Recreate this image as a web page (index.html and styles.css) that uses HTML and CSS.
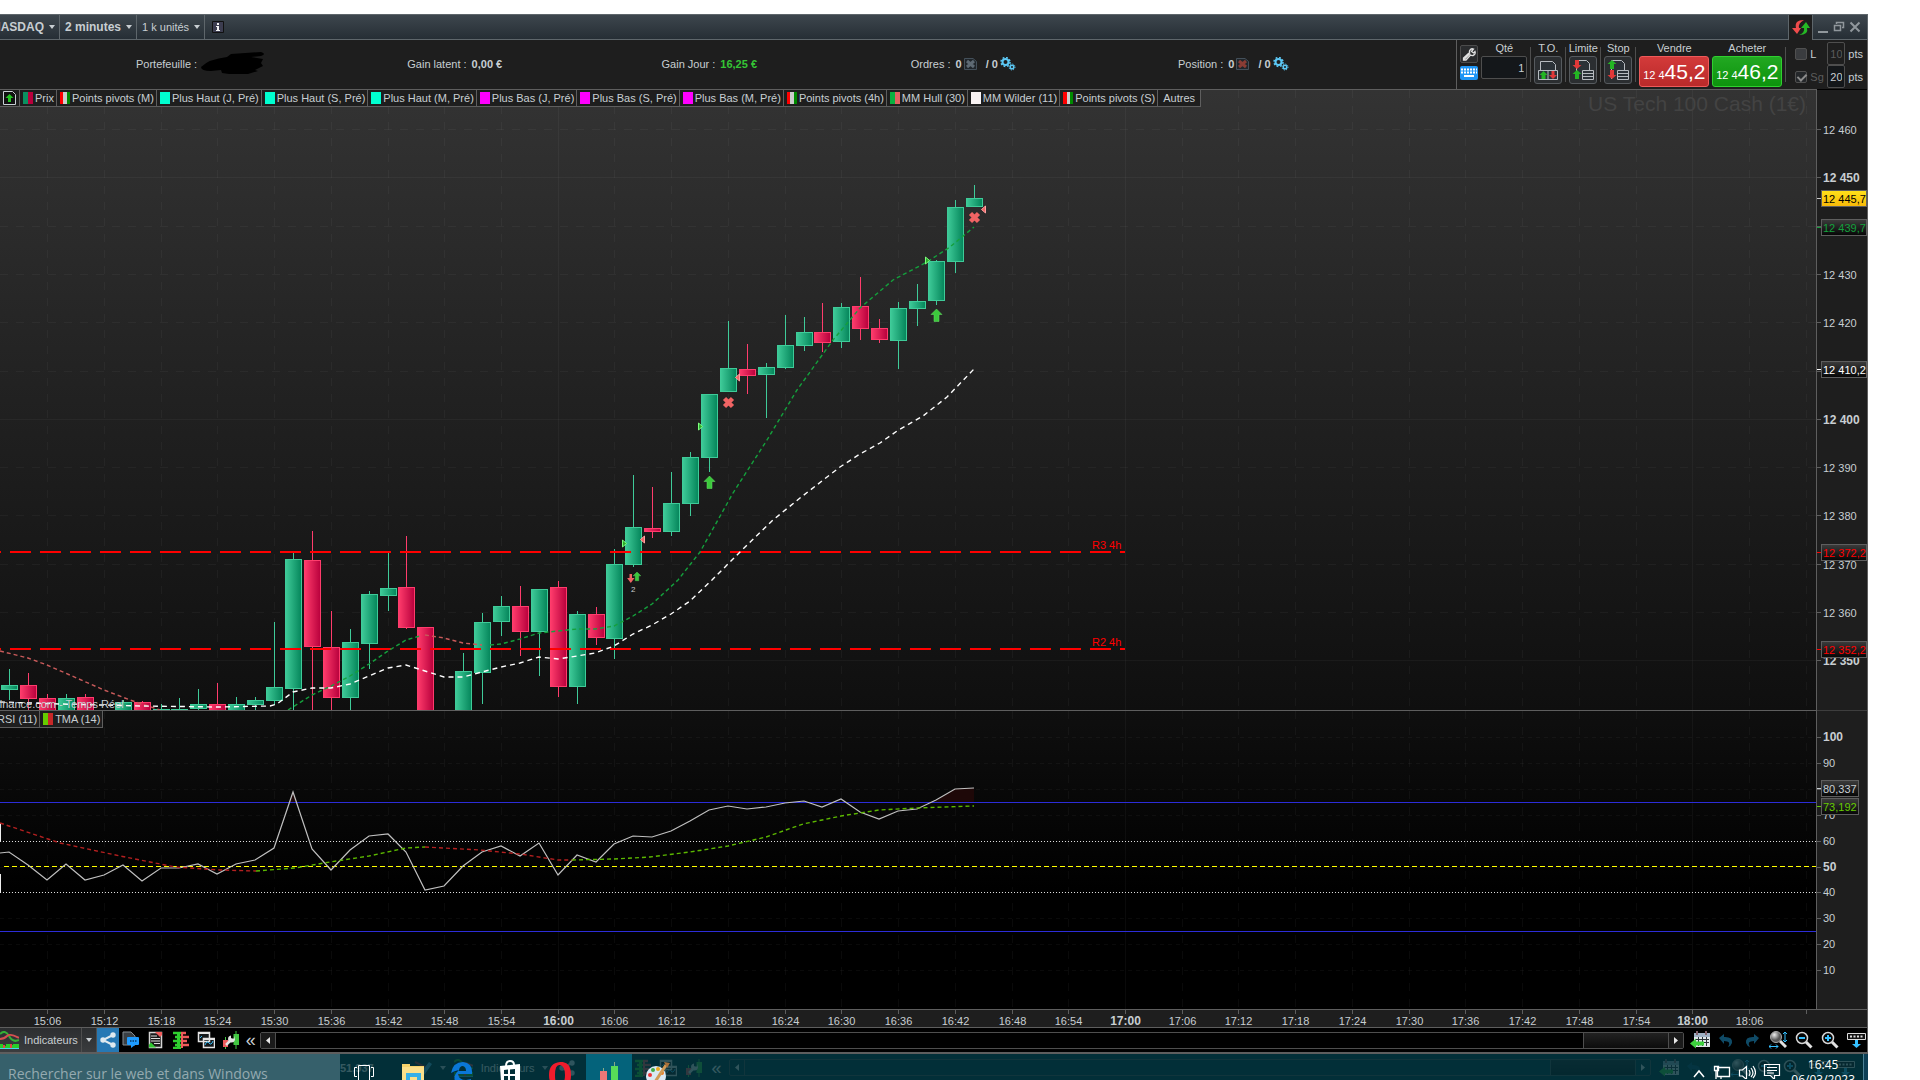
FILE: index.html
```html
<!DOCTYPE html>
<html lang="fr">
<head>
<meta charset="utf-8">
<title>NASDAQ - 2 minutes</title>
<link rel="stylesheet" href="styles.css">
</head>
<body>
<svg class="defs" width="0" height="0" aria-hidden="true">
  <defs>
    <linearGradient id="up"><stop offset="0" stop-color="#3fcb99"/><stop offset="1" stop-color="#04855a"/></linearGradient>
    <linearGradient id="down"><stop offset="0" stop-color="#ff3c6c"/><stop offset="1" stop-color="#b8003c"/></linearGradient>
    <linearGradient id="tag" x2="0" y2="1"><stop offset="0" stop-color="#3c3c3c"/><stop offset="1" stop-color="#050505"/></linearGradient>
    <linearGradient id="gold" x2="0" y2="1"><stop offset="0" stop-color="#ffe21a"/><stop offset="1" stop-color="#f8b808"/></linearGradient>
    <radialGradient id="lens" cx=".35" cy=".3"><stop offset="0" stop-color="#eee"/><stop offset="1" stop-color="#555"/></radialGradient>
    <symbol id="gears" viewBox="0 0 16 14">
      <circle cx="5.500" cy="5" r="3" fill="none" stroke="#5cc8f5" stroke-width="2"/>
      <circle cx="5.500" cy="5" r="4.500" fill="none" stroke="#5cc8f5" stroke-width="1.500" stroke-dasharray="1.770 1.770"/>
      <circle cx="12" cy="10" r="1.800" fill="none" stroke="#5cc8f5" stroke-width="1.500"/>
      <circle cx="12" cy="10" r="3" fill="none" stroke="#5cc8f5" stroke-width="1" stroke-dasharray="1.180 1.180"/>
    </symbol>
    <symbol id="cancel" viewBox="0 0 13 12">
      <path d="M.5.500h8.500l3.500 3v8H.5z" fill="#20262b" stroke="#44505a"/>
      <path d="M3 3l7 6M10 3l-7 6" stroke="currentColor" stroke-width="3"/>
    </symbol>
    <symbol id="share" viewBox="0 0 22 24">
      <path d="M16 7L6 12l10 5" stroke="#dfe9ef" stroke-width="2" fill="none"/>
      <circle cx="16" cy="7" r="2.700" fill="#dfe9ef"/><circle cx="6" cy="12" r="2.700" fill="#dfe9ef"/><circle cx="16" cy="17" r="2.700" fill="#dfe9ef"/>
    </symbol>
    <symbol id="chat" viewBox="0 0 18 18">
      <path d="M1 1h8l4 4v9H1z" fill="#3a4045" stroke="#848c92"/>
      <path d="M6 6h10q1 0 1 1v6q0 1-1 1h-3l-4 3v-3H6q-1 0-1-1V7q0-1 1-1z" fill="#1e9bff"/>
      <path d="M8 10h1.500M10.500 10H12M13 10h1.500" stroke="#083a66" stroke-width="1.500"/>
    </symbol>
    <symbol id="sheet" viewBox="0 0 15 18">
      <path d="M1.500 1.500h12v15h-12z" fill="#1a1a1a" stroke="#d5d5d5" stroke-width="1.500"/>
      <path d="M3 5h6M3 7.500h9M3 10h9M6 12.500h6" stroke="#ddd"/>
      <path d="M7 1h7v3l-2 2z" fill="#f35c5c"/><path d="M1 16.500v-3l2-2 5 5z" fill="#2fc52f"/>
    </symbol>
    <symbol id="book" viewBox="0 0 16 18">
      <path d="M0 2h8M2 6h6M0 10h8M2 14h6M0 17h8" stroke="#2fd02f" stroke-width="2.600"/><path d="M4 1v16h3V1z" fill="#2fd02f"/>
      <path d="M8 2h5M8 6h8M8 10h6M8 14h8" stroke="#ef5a5a" stroke-width="2.600"/><path d="M8 1v16h2V1z" fill="#ef5a5a"/>
    </symbol>
    <symbol id="windows" viewBox="0 0 18 18">
      <path d="M1.500 1.500h11v9h-11zM6.500 7.500h11v9h-11z" fill="#14181b" stroke="#e4e4e4" stroke-width="1.500"/>
      <path d="M1 2h12M6 8h12" stroke="#e4e4e4" stroke-width="2"/>
      <path d="M8 14q2-5 4-2t4-2" stroke="#35b8f0" fill="none"/><path d="M3 7l2-2" stroke="#35b8f0"/>
    </symbol>
    <symbol id="tools" viewBox="0 0 18 18">
      <path d="M3.500 6v12M14 0v18" stroke="#42c842"/><path d="M1 9h5v7H1z" fill="#ef5a5a"/><path d="M11.500 3h5.500v11h-5.500z" fill="#42c842"/>
      <path d="M4 14l6-6" stroke="#e3e3e3" stroke-width="2.500"/><path d="M12 4.500v3h-3v-3a3.500 3.500 0 1 0 4 4z" fill="#e3e3e3"/>
    </symbol>
    <symbol id="zoomin" viewBox="0 0 18 18">
      <path d="M11 11l5.500 5.500" stroke="#e2e2e2" stroke-width="3"/><circle cx="7" cy="7" r="5.500" fill="#050505" stroke="#d6d6d6" stroke-width="1.500"/><path d="M4 7h6M7 4v6" stroke="#35c0ff" stroke-width="2"/>
    </symbol>
    <symbol id="zoomout" viewBox="0 0 18 18">
      <path d="M11 11l5.500 5.500" stroke="#e2e2e2" stroke-width="3"/><circle cx="7" cy="7" r="5.500" fill="#050505" stroke="#d6d6d6" stroke-width="1.500"/><path d="M4 7h6" stroke="#35c0ff" stroke-width="2"/>
    </symbol>
    <symbol id="zoomfit" viewBox="0 0 18 18">
      <path d="M11 10l6 6" stroke="#e2e2e2" stroke-width="3"/><circle cx="7" cy="6" r="5.500" fill="url(#lens)" stroke="#aaa"/><path d="M16 1v10M14 3l2-2 2 2M14 9l2 2 2-2M0 15.500h9M2 13.500l-2 2 2 2M7 13.500l2 2-2 2" stroke="#35c0ff" fill="none"/>
    </symbol>
    <symbol id="undo" viewBox="0 0 14 14"><path d="M0 5l5-4v3q9-.5 8 6q-1 3-4 4q4-6-4-6v3z" fill="#0f4a66"/></symbol>
    <symbol id="goto" viewBox="0 0 20 18">
      <path d="M4 2h16v14H4z" fill="#dfe5e9"/><path d="M4 2h16v4H4z" fill="#9fb0c4"/><path d="M7 0v4M16 0v4" stroke="#84626c" stroke-width="2"/>
      <path d="M5 8.500h14M5 11.500h14M8.500 6v9M12.500 6v9M16.500 6v9" stroke="#2c3338"/><path d="M0 12.500l6-5v3h8v4H6v3z" fill="#3dd03d"/>
    </symbol>
    <symbol id="dock" viewBox="0 0 19 16">
      <path d="M.5 1.500h18v6H.5z" fill="#111" stroke="#ddd"/><path d="M3 4.500h13" stroke="#ddd" stroke-width="2" stroke-dasharray="2 1.500"/><path d="M8 8h3v4h3l-4.500 4L5 12h3z" fill="#35c0ff"/>
    </symbol>
    <symbol id="wave" viewBox="0 0 19 18">
      <path d="M0 3Q5-2 9 5t10 4" stroke="#35b035" stroke-width="2" fill="none"/><path d="M0 8q4 0 7-3t12 2" stroke="#d75050" stroke-width="2" fill="none"/>
      <path d="M0 18v-5h3v2h3v-2h4v1h3v-1h6v5z" fill="#28cc28"/><path d="M3 14h2v4H3zM10 13h2v5h-2z" fill="#e04545"/><path d="M0 17.500h19" stroke="#45d8e8"/>
    </symbol>
  </defs>
</svg>

<div class="app">
  <header class="titlebar">
    <button class="tb-item tb-name">NASDAQ<i class="caret"></i></button>
    <button class="tb-item">2 minutes<i class="caret"></i></button>
    <button class="tb-item tb-light">1 k unités<i class="caret"></i></button>
    <button class="info" aria-label="Informations"><svg width="12" height="12"><path d="M.5.500h11v11H.5z" fill="#3c3d50" stroke="#111"/><path d="M5 2h2v2H5zM4 5h3v4h1v1H4V9h1V6H4z" fill="#f2f2f2"/></svg></button>
    <div class="win">
      <button class="sync" aria-label="Synchroniser"><svg width="18" height="18"><path d="M12 1Q2 1 4 9H0l5 6 4-6H7Q6 4 12 1z" fill="#ef4b4b"/><path d="M7 16q10 0 8-7h3l-4-6-5 6h3q1 5-5 7z" fill="#25b825"/></svg></button>
      <button aria-label="Réduire"><svg width="12" height="14"><path d="M1 11h10v2H1z" fill="#90979c"/></svg></button>
      <button aria-label="Restaurer"><svg width="12" height="14"><path d="M3.500 4V2.500h7v5H9M1.500 5.500h6v5h-6z" fill="none" stroke="#90979c" stroke-width="1.500"/></svg></button>
      <button aria-label="Fermer"><svg width="12" height="14"><path d="M1.500 2.500l9 9M10.500 2.500l-9 9" stroke="#90979c" stroke-width="2"/></svg></button>
    </div>
  </header>

  <div class="status">
    <div class="account">
      <div class="field">Portefeuille :
        <svg width="68" height="26"><path d="M2 16Q10 8 28 6l4-3 30-2q6 2 0 4l-10 1 12 2-2 4 2 3-8 4 3 1-10 3H30l-7-1-1-3-10 1Q2 20 2 16z" fill="#000"/></svg>
      </div>
      <div class="field">Gain latent : <b>0,00 €</b></div>
      <div class="field">Gain Jour : <b class="gain">16,25 €</b></div>
      <div class="field">Ordres : <b>0</b><svg class="c-grey" width="13" height="12"><use href="#cancel"/></svg><b class="slash">/ 0</b><svg width="16" height="14"><use href="#gears"/></svg></div>
      <div class="field">Position : <b>0</b><svg class="c-red" width="13" height="12"><use href="#cancel"/></svg><b class="slash">/ 0</b><svg width="16" height="14"><use href="#gears"/></svg></div>
    </div>
    <form class="trade">
      <div class="tools">
        <button type="button" class="sq" aria-label="Réglages"><svg width="14" height="14"><path d="M2 12.500l6-6M8 6.500a3 3 0 0 1 3.500-4.500L9.500 4.500l2 1.500 1.500-1.500a3 3 0 0 1-4.500 3.500L4 13H1.500V11L7 6" fill="none" stroke="#e0e0e0" stroke-width="1.300"/></svg></button>
        <button type="button" class="kbd" aria-label="Clavier"><svg width="16" height="10"><path d="M0 1.500h16M0 4.500h16" stroke="#fff" stroke-width="2" stroke-dasharray="2 1"/><path d="M3 8h10" stroke="#fff" stroke-width="2"/></svg></button>
      </div>
      <label class="col qty"><span>Qté</span><input value="1"></label>
      <i class="sep"></i>
      <div class="col"><span>T.O.</span><button type="button" class="ord" aria-label="T.O."><svg width="22" height="22"><path d="M3.500 11V2.500h12l3 3V11M1.500 11.500h19v9h-19zM11 11v9" fill="#2b3238" stroke="#b6bbc0"/><path d="M6.500 12l4 4h-2v4h-4v-4h-2z" fill="#23b523"/><path d="M14.500 12h3v4h2.500l-4 4-4-4h2.500z" fill="#e03838"/></svg></button></div>
      <i class="sep"></i>
      <div class="col"><span>Limite</span><button type="button" class="ord" aria-label="Limite"><svg width="22" height="22"><path d="M4.500 20V1.500h10l3 3V11M10.500 11.500h11v9h-11zM10.500 14.500h11M10.500 17.500h11" fill="#2b3238" stroke="#b6bbc0"/><path d="M3 1h4v5h2.500L5 10 .5 6H3z" fill="#e03838"/><path d="M5 11l4.500 4H7v5H3v-5H.5z" fill="#23b523"/></svg></button></div>
      <i class="sep"></i>
      <div class="col"><span>Stop</span><button type="button" class="ord" aria-label="Stop"><svg width="22" height="22"><path d="M4.500 20V1.500h10l3 3V11M10.500 11.500h11v9h-11zM10.500 14.500h11M10.500 17.500h11" fill="#2b3238" stroke="#b6bbc0"/><path d="M5 1l4.500 4H7v5H3V5H.5z" fill="#23b523"/><path d="M3 11h4v5h2.500L5 20 .5 16H3z" fill="#e03838"/></svg></button></div>
      <i class="sep"></i>
      <div class="col deal"><span>Vendre</span><button type="button" class="sell"><small>12 4</small>45,2</button></div>
      <div class="col deal"><span>Acheter</span><button type="button" class="buy"><small>12 4</small>46,2</button></div>
      <i class="sep"></i>
      <div class="stops">
        <label class="off"><input type="checkbox"><span>L</span></label>
        <label><input class="pts dim" value="10"> pts</label>
        <label class="off dim"><input type="checkbox" checked><span>Sg</span></label>
        <label><input class="pts" value="20"> pts</label>
      </div>
    </form>
  </div>

  <main class="chart">
    <section class="plot price">
      <svg id="price" class="canvas"></svg>
      <div class="watermark">US Tech 100 Cash (1€)</div>
      <div class="source">Finance.com - Temps Réel</div>
      <nav class="legend">
        <button class="hide" aria-label="Masquer"><svg width="13" height="14"><path d="M.500.500h9l3 3v10H.5z" fill="#111" stroke="#c8d0d4"/><path d="M6.500 3l4 4h-2.500v4H5V7H2.500z" fill="#22c322"/></svg></button>
        <button><i class="chip prix"></i>Prix</button>
        <button><i class="chip pivot"></i>Points pivots (M)</button>
        <button><i class="chip aqua"></i>Plus Haut (J, Pré)</button>
        <button><i class="chip aqua"></i>Plus Haut (S, Pré)</button>
        <button><i class="chip aqua"></i>Plus Haut (M, Pré)</button>
        <button><i class="chip pink"></i>Plus Bas (J, Pré)</button>
        <button><i class="chip pink"></i>Plus Bas (S, Pré)</button>
        <button><i class="chip pink"></i>Plus Bas (M, Pré)</button>
        <button><i class="chip pivot"></i>Points pivots (4h)</button>
        <button><i class="chip hull"></i>MM Hull (30)</button>
        <button><i class="chip wilder"></i>MM Wilder (11)</button>
        <button><i class="chip pivot"></i>Points pivots (S)</button>
        <button class="others">Autres</button>
      </nav>
    </section>
    <svg id="price-axis" class="axis"></svg>
    <section class="plot rsi">
      <svg id="rsi" class="canvas"></svg>
      <nav class="legend">
        <button class="cut">RSI (11)</button>
        <button><i class="chip tma"></i>TMA (14)</button>
      </nav>
    </section>
    <svg id="rsi-axis" class="axis"></svg>
    <svg id="time-axis" class="time"></svg>
  </main>

  <footer class="toolbar">
    <button class="ind"><svg width="19" height="18"><use href="#wave"/></svg>Indicateurs</button>
    <button class="ind-more" aria-label="Plus"><i class="caret"></i></button>
    <button class="share" aria-label="Partager"><svg width="22" height="24"><use href="#share"/></svg></button>
    <button class="ico" aria-label="Messages"><svg width="18" height="18"><use href="#chat"/></svg></button>
    <button class="ico" aria-label="Liste"><svg width="15" height="18"><use href="#sheet"/></svg></button>
    <button class="ico" aria-label="Carnet"><svg width="16" height="18"><use href="#book"/></svg></button>
    <button class="ico" aria-label="Fenêtres"><svg width="18" height="18"><use href="#windows"/></svg></button>
    <button class="ico" aria-label="Outils"><svg width="18" height="18"><use href="#tools"/></svg></button>
    <button class="chev" aria-label="Replier">«</button>
    <div class="scroll">
      <button aria-label="Gauche"><svg width="14" height="15"><path d="M9 4v7L5 7.500z" fill="#e8e8e8"/></svg></button>
      <div class="track"><div class="thumb"></div></div>
      <button aria-label="Droite"><svg width="14" height="15"><path d="M5 4v7l4-3.500z" fill="#e8e8e8"/></svg></button>
    </div>
    <div class="right">
      <button class="ico" aria-label="Date"><svg width="20" height="18"><use href="#goto"/></svg></button>
      <button class="ico" aria-label="Annuler"><svg width="14" height="14"><use href="#undo"/></svg></button>
      <button class="ico flip" aria-label="Rétablir"><svg width="14" height="14"><use href="#undo"/></svg></button>
      <button class="ico" aria-label="Ajuster"><svg width="18" height="18"><use href="#zoomfit"/></svg></button>
      <button class="ico" aria-label="Zoom arrière"><svg width="18" height="18"><use href="#zoomout"/></svg></button>
      <button class="ico" aria-label="Zoom avant"><svg width="18" height="18"><use href="#zoomin"/></svg></button>
      <button class="ico" aria-label="Ancrer"><svg width="19" height="16"><use href="#dock"/></svg></button>
    </div>
  </footer>

  <div class="taskbar">
    <div class="search">Rechercher sur le web et dans Windows</div>
    <div class="apps">
      <div class="ghost" aria-hidden="true">
        <b>51,937</b>
        <i class="g-box"></i>
        <svg width="18" height="18"><path d="M1 3l12 6" stroke="#b03030" stroke-width="2"/><path d="M6 18l2-6L15 3l3 2-7 10z" fill="#55b8e8"/></svg>
        <i class="caret"></i><svg width="19" height="18"><use href="#wave"/></svg><span>Indicateurs</span><i class="caret"></i>
        <svg width="22" height="24"><use href="#share"/></svg><svg width="18" height="18"><use href="#chat"/></svg><svg width="15" height="18"><use href="#sheet"/></svg>
        <svg width="16" height="18"><use href="#book"/></svg><svg width="18" height="18"><use href="#windows"/></svg><svg width="18" height="18"><use href="#tools"/></svg>
        <span class="chev">«</span>
        <div class="scroll"><svg width="14" height="15"><path d="M9 4v7L5 7.500z" fill="#e8e8e8"/></svg><div class="track"><div class="thumb"></div></div><svg width="14" height="15"><path d="M5 4v7l4-3.500z" fill="#e8e8e8"/></svg></div>
        <svg width="20" height="18"><use href="#goto"/></svg><svg width="14" height="14"><use href="#undo"/></svg><svg class="flip" width="14" height="14"><use href="#undo"/></svg><svg width="18" height="18"><use href="#zoomfit"/></svg><svg width="18" height="18"><use href="#zoomout"/></svg><svg width="18" height="18"><use href="#zoomin"/></svg><svg width="19" height="16"><use href="#dock"/></svg><svg width="19" height="16"><use href="#dock"/></svg>
      </div>
      <button aria-label="Vue des tâches"><svg width="22" height="20"><path d="M5.500 3.500h11v16h-11zM4 5.500H1.500v9H4M18 5.500h2.500v9H18" fill="none" stroke="#fff"/></svg></button>
      <button aria-label="Explorateur"><svg width="24" height="20"><path d="M1 2h8v2h14v16H1z" fill="#f6d36b"/><path d="M1 5h22v15H1z" fill="#fbe08a"/><path d="M5 20v-9h15v9h-4v-5H9v5z" fill="#35b0e8"/></svg></button>
      <button aria-label="Edge"><svg width="22" height="20"><path d="M0 11Q2 0 12 0q10 1 9 12H7q1 6 8 6l5-1v5H6q-6-7 2-14-5 1-8 3zm8-2h7q0-5-4-5-3 1-3 5z" fill="#0a78d7"/></svg></button>
      <button aria-label="Store"><svg width="24" height="22"><path d="M1 6l20-2v18H2z" fill="#fff"/><path d="M7 6q0-5 4-5t4 4" fill="none" stroke="#fff" stroke-width="2"/><path d="M5 10l4-.5V14H5zM11 9.500l5-.5v5h-5zM5 16h4v5H5zM11 16h5v5h-5z" fill="#022f38"/></svg></button>
      <button aria-label="Opera"><svg width="24" height="20"><path fill-rule="evenodd" d="M12 0Q1 1 1 13t11 13 11-13T12 0zm0 3q5 1 5 10t-5 10-5-10 5-10z" fill="#f01c2c"/></svg></button>
      <button class="active" aria-label="Trading"><svg width="22" height="20"><path d="M2 9h7v11H2z" fill="#ee7777"/><path d="M5.500 6v3M16.500 0v20" stroke="#8a8"/><path d="M13 4h7v16h-7z" fill="#58dc58"/></svg></button>
      <button aria-label="Paint"><svg width="26" height="20"><ellipse cx="11" cy="14" rx="10" ry="10" fill="#d9e8f4"/><circle cx="5" cy="13" r="2" fill="#e33"/><circle cx="8" cy="8" r="2" fill="#4a4"/><circle cx="13" cy="7" r="2" fill="#eba920"/><circle cx="17" cy="11" r="2" fill="#ed7d23"/><path d="M10 20L21 3" stroke="#d19a55" stroke-width="3"/><path d="M19 0l6 1-3 5z" fill="#a9713c"/></svg></button>
      <div class="tray">
        <svg width="14" height="16"><path d="M2 14l5-6 5 6" fill="none" stroke="#fff" stroke-width="1.500"/></svg>
        <svg width="18" height="16"><path d="M4.500 4.500h12v9h-12zM1.500 3.500h4v4h-4zM8 16v-2M3 8v8" fill="none" stroke="#fff" stroke-width="1.300"/></svg>
        <svg width="18" height="16"><path d="M1.500 7h3l4-3.500v13L4.500 13h-3zM11 7q2 3 0 6M13 5q4 5 0 9M15 3q5 7 0 12" fill="none" stroke="#fff" stroke-width="1.200"/></svg>
        <svg width="18" height="16"><path d="M1.500 1.500h15v11h-5v4l-4-4h-6zM4 4.500h10M4 7.500h10M4 10h7" fill="none" stroke="#fff" stroke-width="1.200"/></svg>
        <div class="clock">16:45<br>06/03/2023</div>
      </div>
    </div>
    <div class="desk"></div>
  </div>
</div>
<script src="chart.js"></script>
</body>
</html>
```
FILE: styles.css
```css
* { box-sizing: border-box; }
body { margin: 0; background: #fff; color: #c8ced2; font: 11px/14px "Liberation Sans", Arial, sans-serif; height: 100vh; overflow: hidden; }
button, input { font: inherit; color: inherit; margin: 0; }
button { background: none; border: 0; padding: 0; display: flex; align-items: center; justify-content: center; white-space: nowrap; }
svg { display: block; flex: none; }
.defs { position: absolute; }
.app { margin: 14px 52px 0 0; background: #1e1e1e; overflow: hidden; }
.caret { width: 0; height: 0; border: 3px solid transparent; border-top: 4px solid #c8ced2; border-bottom: 0; flex: none; }

.titlebar { display: flex; height: 26px; border-top: 1px solid #5e666b; border-bottom: 1px solid #5e666b; background: linear-gradient(#3d464d, #262e35); border-right: 1px solid #5e666b; }
.tb-item { gap: 5px; padding: 0 4px 0 5px; border-right: 1px solid #5e666b; font-weight: bold; font-size: 12px; }
.tb-name { margin-left: -13px; }
.tb-light { font-weight: normal; font-size: 11px; }
.info { padding: 0 7px; }
.win { margin-left: auto; display: flex; gap: 4px; padding-right: 6px; }
.sync { width: 25px; height: 25px; background: #1e1e1e; border: 1px solid #5e666b; border-width: 0 1px; }

.status { display: flex; height: 49px; border-right: 1px solid #5e5e5e; }
.account { flex: 1; display: grid; grid-template-columns: 271fr 254fr 249fr 267fr 278fr; padding: 0 0 2px 136px; align-items: center; }
.field { display: flex; align-items: center; gap: 2px; white-space: nowrap; }
.field b { margin-left: 3px; }
.field .slash { margin-left: 7px; }
.gain { color: #35c535; }
.c-grey { color: #5e6a74; }
.c-red { color: #8a3c34; }

.trade { display: flex; gap: 3px; padding: 1px 4px 0 3px; border-left: 1px solid #5e5e5e; }
.tools { display: flex; flex-direction: column; gap: 3px; padding-top: 4px; }
.sq, .kbd { width: 18px; border-radius: 2px; }
.sq { height: 18px; background: #2a2c2e; border: 1px solid #4c4c4c; }
.kbd { height: 14px; background: #1e95f5; }
.col { display: flex; flex-direction: column; align-items: center; gap: 1px; width: 28px; white-space: nowrap; }
.qty { width: 46px; }
.qty input { width: 46px; height: 23px; border: 1px solid #4e4e4e; border-radius: 2px; background: #14171a; text-align: right; padding: 0 2px; }
.sep { width: 1px; height: 35px; margin-top: 6px; background: #4e4e4e; }
.ord { width: 28px; height: 28px; border: 1px solid #565a5e; border-radius: 3px; background: #2b2e31; }
.deal { width: 70px; }
.deal button { width: 70px; height: 31px; border-radius: 3px; color: #fff; font-size: 21px; line-height: 29px; align-items: baseline; }
.deal small { font-size: 11px; }
.sell { background: linear-gradient(#d33a3a, #b92a2a); border: 1px solid #ef5a5a; }
.buy { background: linear-gradient(#22a822, #0d930d); border: 1px solid #2fd02f; }
.stops { display: grid; grid-template-columns: 32px auto; grid-auto-rows: 23px; align-content: start; align-items: center; padding: 1px 0 0 6px; }
.stops label { display: flex; align-items: center; gap: 3px; }
.off input { appearance: none; margin: 0; width: 12px; height: 12px; border: 1px solid #505050; border-radius: 2px; background: #3a3c3f; flex: none; }
.off input:checked { background: #24272a; }
.off input:checked::after { content: ""; display: block; width: 4px; height: 7px; margin: 0 3px; border: solid #8c8c8c; border-width: 0 2px 2px 0; transform: rotate(45deg); }
.dim { color: #5c5c5c; }
.pts { width: 18px; height: 23px; border: 1px solid #4e4e4e; border-radius: 2px; background: #14171a; padding: 0 2px; }
.pts.dim { background: #1e1e1e; }

.chart { display: grid; grid-template-columns: 1fr 50px; grid-template-rows: auto auto 19px; border-right: 1px solid #5e5e5e; }
.plot { position: relative; border-top: 1px solid #5e5e5e; border-right: 1px solid #5e5e5e; min-width: 0; }
.price { height: 621px; background: linear-gradient(#333, #0f0f0f); }
.rsi { height: 299px; background: linear-gradient(#0f0f0f, #000 60%); }
.canvas { width: 100%; height: 100%; overflow: hidden; }
.axis { width: 100%; height: 100%; }
.time { grid-column: 1 / -1; width: 100%; height: 19px; border-top: 1px solid #5e5e5e; border-bottom: 1px solid #5e5e5e; }
.legend { position: absolute; left: 0; top: 0; display: flex; height: 17px; background: #1e1e1e; border-bottom: 1px solid #5e5e5e; }
.legend button { gap: 2px; padding: 0 2px 0 3px; border-right: 1px solid #5e5e5e; }
.legend .hide { padding: 0 3px; }
.legend .others { padding: 0 5px; }
.legend .cut { margin-left: -6px; }
.chip { width: 10px; height: 12px; }
.prix { background: linear-gradient(90deg, #0a9160 50%, #b8003c 50%); }
.pivot { background: linear-gradient(90deg, #f00 35%, #ccc 35% 68%, #008a00 68%); }
.aqua { background: #00ffd0; }
.pink { background: #f0f; }
.hull { background: linear-gradient(90deg, #08b040 50%, #e06060 50%); }
.wilder { background: #faf4f4; }
.tma { background: linear-gradient(90deg, #66cc00 50%, #c82828 50%); }
.watermark { position: absolute; right: 10px; top: 2px; font-size: 21px; line-height: 24px; color: #434343; }
.source { position: absolute; left: -7px; bottom: 0; line-height: 12px; color: #c8ced2; }
svg text { fill: #c8ced2; font-size: 11px; }
svg text.major { font-size: 12px; font-weight: bold; }

.toolbar { display: flex; align-items: center; height: 26px; background: #000; border-bottom: 2px solid #5e5e5e; border-right: 1px solid #5e5e5e; }
.ind, .ind-more { height: 24px; background: linear-gradient(#2c2e30, #3a3c3e); border-right: 1px solid #4e4e4e; }
.ind { gap: 5px; padding-right: 3px; }
.ind-more { width: 15px; }
.share { background: #2678b4; margin-right: 2px; }
.ico { width: 20px; margin-right: 5px; }
.chev { font-size: 18px; margin-right: 4px; }
.flip { transform: scaleX(-1); }
.scroll { flex: 1; display: flex; height: 17px; border: 1px solid #4e4e4e; border-radius: 2px; }
.scroll button { background: #1a1a1a; }
.track { flex: 1; display: flex; justify-content: flex-end; border: 1px solid #4e4e4e; border-width: 0 1px; }
.thumb { width: 85px; background: linear-gradient(#222, #0c0c0c); border-left: 1px solid #4e4e4e; }
.right { display: flex; gap: 6px; padding: 0 1px 0 6px; }
.right .ico { margin: 0; }

.taskbar { display: flex; height: 27px; overflow: hidden; background: #022f38; color: #fff; }
.search { width: 340px; padding: 8px 8px 0; background: #36606b; color: #94aab0; font: 14px/24px "Open Sans", "Noto Sans", sans-serif; white-space: nowrap; }
.apps { position: relative; flex: 1; min-width: 0; display: flex; padding-left: 1px; }
.apps button { width: 46px; height: 28px; align-items: flex-end; margin-right: 3px; }
.apps button, .tray { position: relative; }
.apps .active { background: #04637b; }
.ghost { position: absolute; inset: 0; display: flex; align-items: center; gap: 8px; padding-right: 8px; opacity: .2; }
.ghost .g-box { width: 24px; }
.ghost .chev { margin: 0; }
.tray { margin-left: auto; display: flex; align-items: flex-end; gap: 7px; padding: 0 8px 2px 0; }
.clock { height: 22px; margin-left: 3px; font: 12px/15px "Open Sans", "Noto Sans", sans-serif; text-align: center; white-space: nowrap; }
.desk { width: 5px; background: #0d3f55; border-left: 1px solid #4c8296; }
```
FILE: chart.js
```js
const NS = 'http://www.w3.org/2000/svg';
const STEP = 18.91, X0 = 9.3;
const x = k => Math.round(X0 + STEP * k);

function el(parent, name, attrs, text) {
  const node = document.createElementNS(NS, name);
  for (const key in attrs) node.setAttribute(key, attrs[key]);
  if (text) node.textContent = text;
  parent.appendChild(node);
  return node;
}
const line = (g, x1, y1, x2, y2, stroke, dash, w) =>
  el(g, 'line', { x1, y1, x2, y2, stroke, 'stroke-width': w || 1, 'stroke-dasharray': dash || 'none' });
const curve = (g, pts, stroke, dash) =>
  el(g, 'polyline', { points: pts, fill: 'none', stroke, 'stroke-width': dash ? 1.4 : 1.2, 'stroke-dasharray': dash || 'none' });

// direction, wick top, body top, body bottom, wick bottom
const candles = [
  'u 669 685 690 700', 'd 673 685 699 711', 'd 694 698 711 711', 'u 694 698 711 711', 'd 694 697 711 711', '',
  'u 700 702 711 711', 'd 701 702 711 711', 'u 704 709 711 711', 'u 698 709 711 711', 'u 689 704 709 711', 'd 683 704 711 711',
  'u 697 704 711 711', 'u 697 700 705 711', 'u 622 687 701 705', 'u 553 559 689 711', 'd 531 560 647 711', 'd 611 647 698 711',
  'u 629 642 698 711', 'u 591 594 644 669', 'u 553 588 596 611', 'd 536 587 628 629', 'd 627 627 711 711', '',
  'u 653 671 711 711', 'u 613 622 673 704', 'u 596 606 622 636', 'd 586 606 632 656', 'u 589 589 632 676', 'd 581 587 687 697',
  'u 611 614 687 704', 'd 607 614 638 645', 'u 549 564 639 659', 'u 475 527 565 567', 'd 487 528 532 538', 'u 472 503 532 536',
  'u 452 457 504 516', 'u 394 394 458 472', 'u 321 368 392 392', 'd 344 369 376 394', 'u 363 367 375 418', 'u 315 345 368 369',
  'u 317 332 346 351', 'd 303 332 343 352', 'u 303 307 342 348', 'd 277 306 329 340', 'd 319 328 340 343', 'u 302 308 341 369',
  'u 284 301 309 326', 'u 260 261 301 305', 'u 200 207 262 273', 'u 185 198 207 207'
];

const GRID = 'rgba(255,255,255,.04)';
function grid(g, top, bottom) {
  for (let i = 0; i < 32; i++) {
    const gx = x(2 + 3 * i) + .5;
    line(g, gx, top, gx, bottom, GRID, [9, 19, 29].includes(i) ? '' : '8 8');
  }
}

// price panel
const price = el(document.getElementById('price'), 'g', { transform: 'translate(0,-90)' });
grid(price, 90, 711);
const yPrice = p => Math.round(129 + (460 - p) * 4.83);
for (let p = 460; p >= 350; p -= 10)
  line(price, 0, yPrice(p) + .5, 4000, yPrice(p) + .5, GRID, p % 50 ? '8 8' : '');
candles.forEach((c, k) => {
  if (!c) return;
  const [d, ...v] = c.split(' ');
  const [wt, t, b, wb] = v.map(Number), up = d === 'u', stroke = up ? '#3fcb99' : '#ff3c6c';
  line(price, x(k) + .5, wt, x(k) + .5, wb, stroke);
  el(price, 'rect', { x: x(k) - 7.5, y: t + .5, width: 16, height: Math.max(1, b - t - 1), fill: up ? 'url(#up)' : 'url(#down)', stroke });
});
[[552, 'R3 4h'], [649, 'R2 4h']].forEach(([y, name]) => {
  line(price, -20, y, 1125, y, '#f00', '21 9', 2);
  el(price, 'text', { x: 1092, y: y - 3, style: 'fill:#f00' }, name);
});
curve(price, '0,651 28,658 47,665 104,690 130,700 160,710', '#c85a5a', '4 3');
curve(price, '288,710 312,695 331,686 350,676 369,664 388,651 406,640 420,636', '#14a03c', '4 3');
curve(price, '425,635 444,638 463,643 482,645', '#c85a5a', '4 3');
curve(price, '490,645 501,644 520,639 539,633 558,631 577,629 595,629 614,626 633,616 652,604 678,580 700,552 733,493 767,440 797,390 833,340 860,308 893,280 927,262 950,247 974,227', '#14a03c', '4 3');
curve(price, '0,702 60,704 142,706 217,707 270,706 277,704 293,692 312,688 331,688 350,684 369,676 388,668 406,665 425,671 444,677 463,677 482,672 501,667 520,663 539,657 558,659 577,656 595,653 614,646 633,634 652,625 671,614 690,601 712,580 740,552 773,520 800,498 840,467 860,454 880,443 897,431 923,416 947,397 974,369', '#fff', '5 4');

const arrowUp = (ax, ay, s) => el(price, 'path', { d: 'M0 0l5.500 5.500H2.500v7h-5v-7h-3z', transform: `translate(${ax},${ay}) scale(${s})`, fill: '#3cc83c', stroke: '#66e066', 'stroke-width': .5 });
arrowUp(709.5, 476, 1);
arrowUp(936.5, 309, 1);
arrowUp(637, 572, .7);
el(price, 'path', { d: 'M629.500 574h2.500v4h2.500l-3.700 5-3.700-5h2.400z', fill: '#f06464' });
el(price, 'text', { x: 631, y: 592, style: 'font-size:8px' }, '2');
[[728.5, 402.5], [974.5, 217.5]].forEach(([cx, cy]) =>
  el(price, 'path', { d: `M${cx - 4} ${cy - 4}l8 8m0-8l-8 8`, stroke: '#f06464', 'stroke-width': 4.5 }));
[[622, 543], [698, 426], [925, 260]].forEach(([a, b]) =>
  el(price, 'path', { d: `M${a + .5} ${b - 3}l4 3.500-4 3.500z`, fill: '#2aa82a', stroke: '#7dff7d' }));
[[644, 539], [739, 377], [985, 209]].forEach(([a, b]) =>
  el(price, 'path', { d: `M${a + .5} ${b - 3}l-4 3.500 4 3.500z`, fill: '#f06464', stroke: '#ffa0a0' }));

// right-hand price scale
const pa = el(document.getElementById('price-axis'), 'g', { transform: 'translate(0,-89)' });
line(pa, 0, 89.5, 60, 89.5, '#000');
for (let p = 460; p >= 350; p -= 10) {
  line(pa, 0, yPrice(p) + .5, 4, yPrice(p) + .5, '#5e5e5e');
  if (p !== 440 && p !== 410) el(pa, 'text', { x: 6, y: yPrice(p) + 5, class: p % 50 ? '' : 'major' }, '12 ' + p);
}
function tag(g, y, w, text, color, fill) {
  line(g, 0, y, 4, y, color === '#000' ? '#ccc' : color);
  el(g, 'rect', { x: 4.5, y: y - 8, width: w, height: 16, fill: fill || 'url(#tag)', stroke: '#5e5e5e' });
  el(g, 'text', { x: 6, y: y + 4.5, style: 'fill:' + color }, text);
}
tag(pa, 198.5, 45, '12 445,7', '#000', 'url(#gold)');
tag(pa, 227.5, 45, '12 439,7', '#14a03c');
tag(pa, 369.5, 45, '12 410,2', '#fff');
tag(pa, 552.5, 45, '12 372,2', '#f00');
tag(pa, 649.5, 45, '12 352,2', '#f00');

// RSI panel
const rsi = el(document.getElementById('rsi'), 'g', { transform: 'translate(0,-711)' });
grid(rsi, 711, 1010);
const yRsi = v => Math.round(737 + (100 - v) * 2.59);
for (let v = 100; v > 0; v -= 10)
  line(rsi, 0, yRsi(v) + .5, 4000, yRsi(v) + .5, GRID, '4 4');
el(rsi, 'path', { d: 'M934 802L955 789 974 788V802zM290 802l3-10 3 10z', fill: '#1e0808' });
line(rsi, 0, 841.5, 4000, 841.5, '#ddd', '1 2');
line(rsi, 0, 892.5, 4000, 892.5, '#ddd', '1 2');
line(rsi, 4, 866.5, 4000, 866.5, '#ffff00', '5 3');
line(rsi, 0, 802.5, 4000, 802.5, '#2c2cd8');
line(rsi, 0, 931.5, 4000, 931.5, '#2c2cd8');
line(rsi, .5, 823, .5, 841, '#eee');
line(rsi, .5, 874, .5, 893, '#eee');
const rsiY = [852, 865, 880, 864, 880, 875, 865, 881, 868, 868, 864, 874, 864, 860, 848, 792, 849, 870, 850, 836, 834, 852, 890, 886, 866, 852, 846, 856, 843, 875, 855, 862, 844, 836, 837, 831, 821, 810, 806, 809, 807, 803, 801, 807, 799, 812, 819, 811, 809, 800, 789, 788];
curve(rsi, '0,853 ' + rsiY.map((y, k) => x(k) + ',' + y).join(' '), '#c0c0c0');
curve(rsi, '0,823 60,843 120,856 175,867 220,870 256,871', '#b42020', '4 3');
curve(rsi, '256,871 295,868 330,862 369,856 406,848 425,847', '#5cb800', '4 3');
curve(rsi, '425,847 480,850 520,854 558,860 572,860', '#b42020', '4 3');
curve(rsi, '572,860 614,859 650,857 690,852 728,846 766,837 803,824 841,816 879,810 917,808 974,806', '#5cb800', '4 3');

const ra = el(document.getElementById('rsi-axis'), 'g', { transform: 'translate(0,-710)' });
line(ra, 0, 710.5, 60, 710.5, '#3e3e3e');
for (let v = 100; v > 0; v -= 10) {
  line(ra, 0, yRsi(v) + .5, 4, yRsi(v) + .5, '#5e5e5e');
  if (v !== 80) el(ra, 'text', { x: 6, y: yRsi(v) + 4, class: v % 50 ? '' : 'major' }, String(v));
}
tag(ra, 788.5, 37, '80,337', '#c8ced2');
tag(ra, 806.5, 37, '73,192', '#66cc00');

// time scale
const ta = document.getElementById('time-axis');
for (let i = 0; i < 32; i++) {
  const tx = x(2 + 3 * i), min = 15 * 60 + 6 + 6 * i;
  line(ta, tx + .5, 0, tx + .5, 4, '#5e5e5e');
  if (i < 31) el(ta, 'text', { x: tx + .5, y: 15, 'text-anchor': 'middle', class: min % 60 ? '' : 'major' },
    Math.floor(min / 60) + ':' + String(min % 60).padStart(2, '0'));
}
```
